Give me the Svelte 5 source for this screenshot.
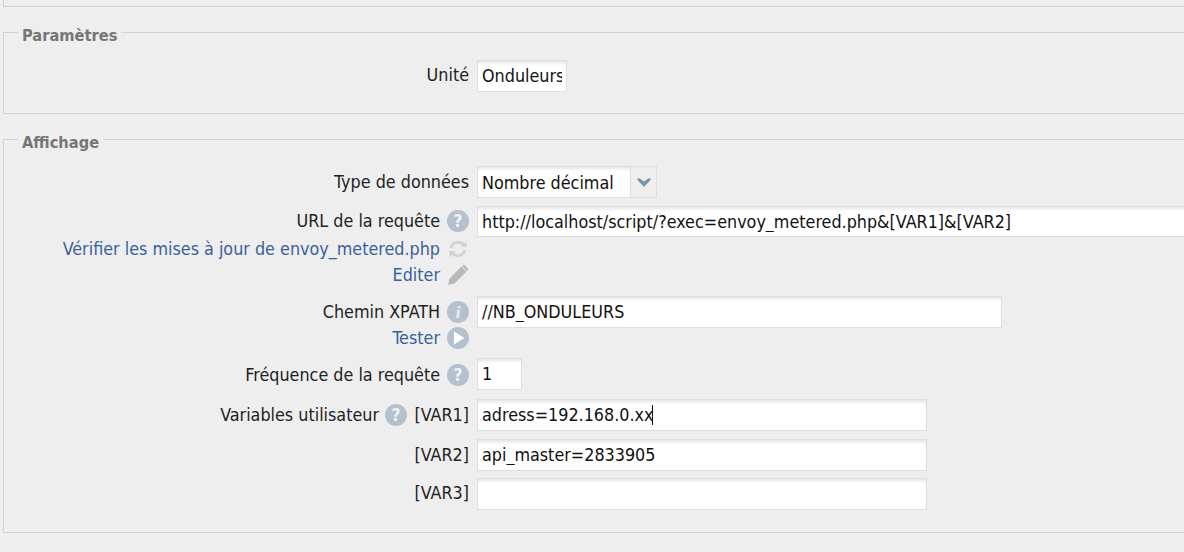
<script>
  let unite = "Onduleurs";
  let url = "http://localhost/script/?exec=envoy_metered.php&[VAR1]&[VAR2]";
</script>

{#snippet help(mark = "?")}
  <span class="badge" class:info={mark === "i"}>{mark}</span>
{/snippet}

<main>
  <div class="top"></div>

  <fieldset class="params">
    <legend>Paramètres</legend>
    <div class="row">
      <div class="label">Unité</div>
      <input class="unit" value={unite} />
    </div>
  </fieldset>

  <fieldset class="display">
    <legend>Affichage</legend>

    <div class="row first">
      <div class="label">Type de données</div>
      <div class="select">
        <span class="value">Nombre décimal</span>
        <span class="arrow">
          <svg width="14" height="9" viewBox="0 0 14 9"><path d="M0 1.500L2 0l5 3.500L12 0l2 1.500L7 9z" fill="#7d93a8" /></svg>
        </span>
      </div>
    </div>

    <div class="row url">
      <div class="label stack">
        <div class="line">URL de la requête {@render help()}</div>
        <div class="line link">
          Vérifier les mises à jour de envoy_metered.php
          <svg class="icon" width="22" height="22" viewBox="0 0 22 22" fill="none" stroke="#d3d3d3" stroke-width="3">
            <path d="M4 10a7.500 7.500 0 0 1 13-3" />
            <path d="M18 12a7.500 7.500 0 0 1-13 3" />
            <path d="M19.500 3v6h-6zM2.500 19v-6h6z" fill="#d3d3d3" stroke="none" />
          </svg>
        </div>
        <div class="line link">
          Editer
          <svg class="icon" width="22" height="22" viewBox="0 0 22 22" fill="#b9b9b9">
            <path d="M1 21l1.500-6.500L14.500 2.500l5 5L7.500 19.500z" />
            <path d="M16 1l1-.5 4.500 4.500-.5 1-1 1-5-5z" />
          </svg>
        </div>
      </div>
      <input class="wide" value={url} />
    </div>

    <div class="row xpath">
      <div class="label stack">
        <div class="line">Chemin XPATH {@render help("i")}</div>
        <div class="line link">
          Tester
          <span class="badge play">
            <svg width="12" height="14" viewBox="0 0 12 14"><path d="M1 0.500L11.500 7 1 13.500z" fill="#fff" /></svg>
          </span>
        </div>
      </div>
      <input class="path" value="//NB_ONDULEURS" />
    </div>

    <div class="row freq">
      <div class="label">Fréquence de la requête {@render help()}</div>
      <input class="num" value="1" />
    </div>

    <div class="row var one">
      <div class="label vars">Variables utilisateur {@render help()} <span class="tag">[VAR1]</span></div>
      <div class="caret-wrap">
        <input class="varin" value="adress=192.168.0.xx" />
        <span class="caret"></span>
      </div>
    </div>

    <div class="row var two">
      <div class="label"><span class="tag">[VAR2]</span></div>
      <input class="varin" value="api_master=2833905" />
    </div>

    <div class="row var three">
      <div class="label"><span class="tag">[VAR3]</span></div>
      <input class="varin" value="" />
    </div>
  </fieldset>
</main>

<style>
  :global(html, body) {
    margin: 0;
    padding: 0;
    background: #eeeeee;
    overflow: hidden;
  }

  main {
    width: 1184px;
    height: 552px;
    overflow: hidden;
    background: #eeeeee;
    color: #222;
    font-family: "DejaVu Sans", sans-serif;
    font-stretch: condensed;
    font-size: 17.8px;
    padding-left: 3px;
    box-sizing: border-box;
  }

  .top {
    height: 6px;
    width: 1300px;
    border: 1px solid #d2d2d2;
    border-top: none;
  }

  fieldset {
    width: 1300px;
    box-sizing: border-box;
    margin: 0;
    padding: 0;
    border: 1px solid #d2d2d2;
    min-width: 0;
  }

  legend {
    margin: 0 0 0 14px;
    padding: 0 4px;
    height: 0;
    font-weight: bold;
    font-size: 16.3px;
    line-height: 6px;
    color: #767676;
  }

  .params {
    margin-top: 25px;
    height: 82px;
  }

  .params .row {
    padding-top: 27px;
  }

  .display {
    margin-top: 25px;
    height: 394px;
  }

  .row {
    display: flex;
    align-items: flex-start;
  }

  .first {
    padding-top: 26px;
  }

  .first .label {
    margin-top: 1px;
  }

  .url {
    margin-top: 8px;
    height: 82px;
  }

  .url .line:nth-child(2) {
    margin-top: 2px;
  }

  .xpath {
    margin-top: 8px;
    height: 54px;
  }

  .xpath .stack {
    padding-top: 3px;
  }

  .freq {
    margin-top: 8px;
  }

  .freq .label {
    margin-top: 2px;
  }

  .var {
    margin-top: 8px;
  }

  .var.one {
    margin-top: 9px;
  }

  .var.one .label,
  .var.two .label {
    margin-top: 1px;
  }

  .var.three {
    margin-top: 7px;
  }

  .label {
    width: 465px;
    flex: none;
    margin-right: 8px;
    text-align: right;
    line-height: 30px;
    display: flex;
    justify-content: flex-end;
    align-items: center;
    gap: 7px;
    white-space: nowrap;
  }

  .stack {
    display: block;
    padding-top: 2px;
  }

  .line {
    display: flex;
    justify-content: flex-end;
    align-items: center;
    gap: 7px;
    height: 26px;
    line-height: 26px;
  }

  .link {
    color: #3a5f9c;
  }

  .tag {
    width: 56px;
    text-align: right;
  }

  .vars {
    gap: 6px;
  }

  .badge {
    display: inline-flex;
    width: 22px;
    height: 22px;
    flex: none;
    border-radius: 50%;
    align-items: center;
    justify-content: center;
    background: #b4c0cd;
    color: #eef1f4;
    font-weight: bold;
    font-size: 18px;
    line-height: 1;
  }

  .info {
    font-family: "Liberation Serif", serif;
    font-style: italic;
    font-size: 17px;
  }

  .play svg {
    margin-left: 2px;
  }

  .icon {
    flex: none;
  }

  input,
  .select {
    box-sizing: border-box;
    height: 32px;
    border: 1px solid #dedede;
    background: #fff;
    box-shadow: inset 0 4px 4px -3px #d8d8d8;
    font-family: inherit;
    font-stretch: inherit;
    font-size: 17.8px;
    color: #111;
    padding: 0 4px 1px;
    outline: none;
    margin: 0;
    flex: none;
  }

  .unit {
    width: 90px;
  }

  .wide {
    width: 800px;
    height: 31px;
  }

  .path {
    width: 525px;
  }

  .num {
    width: 45px;
  }

  .varin {
    width: 450px;
  }

  .select {
    width: 180px;
    padding: 0;
    display: flex;
    align-items: center;
  }

  .value {
    width: 152px;
    padding-left: 4px;
    box-sizing: border-box;
    height: 100%;
    line-height: 32px;
  }

  .arrow {
    flex: 1;
    height: 100%;
    background: #eeeeee;
    border-left: 1px solid #dedede;
    display: flex;
    align-items: center;
    justify-content: center;
  }

  .caret-wrap {
    position: relative;
    flex: none;
  }

  .caret {
    position: absolute;
    left: 175px;
    top: 6px;
    width: 1px;
    height: 20px;
    background: #111;
  }
</style>
